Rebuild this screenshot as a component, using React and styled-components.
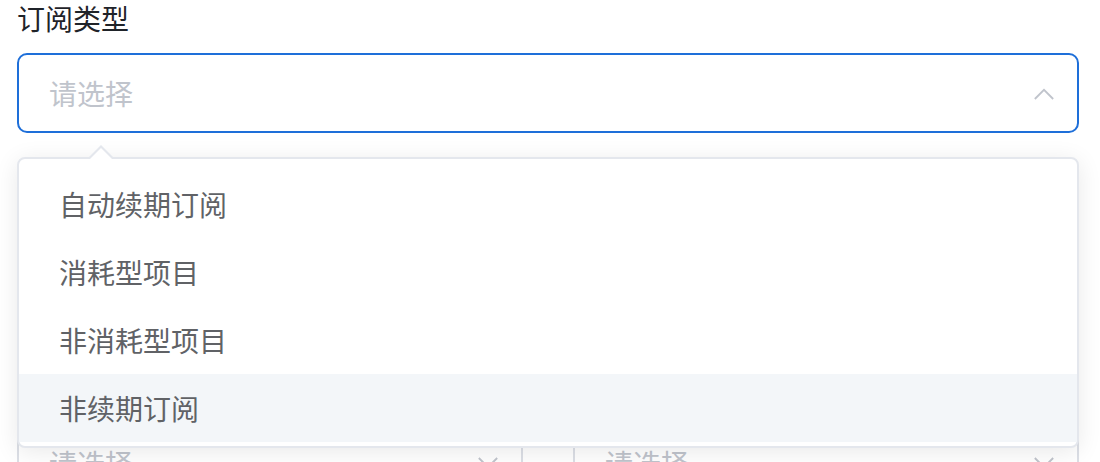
import React from "react";
import styled, { createGlobalStyle } from "styled-components";

const GlobalStyle = createGlobalStyle`
  html, body {
    margin: 0;
    padding: 0;
    background: #ffffff;
    overflow: hidden;
  }
  body {
    font-family: "Noto Sans CJK SC", "Noto Sans", sans-serif;
  }
`;

const options = ["自动续期订阅", "消耗型项目", "非消耗型项目", "非续期订阅"];

export default function App() {
    return (
        <Page>
            <GlobalStyle />
            <Label>订阅类型</Label>
            <Field>
                <SelectBox focused>
                    <Placeholder>请选择</Placeholder>
                    <Chevron up />
                </SelectBox>
                <Dropdown>
                    <Arrow />
                    <OptionList>
                        {options.map((o, i) => (
                            <Option key={o} hover={i === 3}>{o}</Option>
                        ))}
                    </OptionList>
                </Dropdown>
            </Field>
            <Row>
                <SelectBox grow>
                    <Placeholder>请选择</Placeholder>
                    <Chevron />
                </SelectBox>
                <Separator />
                <SelectBox grow>
                    <Placeholder>请选择</Placeholder>
                    <Chevron />
                </SelectBox>
            </Row>
        </Page>
    );
}

function Chevron({ up }) {
    return (
        <ChevronIcon viewBox="0 0 24 16" up={up ? 1 : 0}>
            <polyline points="2,14 12,4 22,14" fill="none" stroke="#c0c4cc" strokeWidth="2" />
        </ChevronIcon>
    );
}

const Page = styled.div`
  padding: 0 21px 0 17px;
`;

const Label = styled.div`
  font-size: 28px;
  line-height: 36px;
  color: #1f2329;
  margin-bottom: 17px;
`;

const Field = styled.div`
  position: relative;
`;

const SelectBox = styled.div`
  box-sizing: border-box;
  height: 80px;
  display: flex;
  align-items: center;
  justify-content: space-between;
  padding: 0 22px 0 30px;
  border: 2px solid ${p => (p.focused ? "#1e6fd9" : "#dcdfe6")};
  border-radius: 10px;
  background: #fff;
  flex: ${p => (p.grow ? "1 1 0" : "none")};
`;

const Placeholder = styled.span`
  font-size: 28px;
  color: #c0c4cc;
  line-height: 1;
`;

const ChevronIcon = styled.svg`
  width: 22px;
  height: 15px;
  transform: ${p => (p.up ? "none" : "rotate(180deg)")};
`;

const Dropdown = styled.div`
  position: absolute;
  top: 104px;
  left: 0;
  right: 0;
  box-sizing: border-box;
  border: 2px solid #e4e7ed;
  border-radius: 8px;
  background: #fff;
  box-shadow: 0 4px 24px rgba(0, 0, 0, 0.09);
  z-index: 10;
`;

const Arrow = styled.div`
  position: absolute;
  top: -14px;
  left: 69px;
  width: 0;
  height: 0;
  border-left: 13px solid transparent;
  border-right: 13px solid transparent;
  border-bottom: 13px solid #e4e7ed;

  &::after {
    content: "";
    position: absolute;
    left: -11px;
    top: 3px;
    border-left: 11px solid transparent;
    border-right: 11px solid transparent;
    border-bottom: 11px solid #fff;
  }
`;

const OptionList = styled.ul`
  list-style: none;
  margin: 0;
  padding: 11px 0 4px;
`;

const Option = styled.li`
  height: 68px;
  display: flex;
  align-items: center;
  padding: 0 40px;
  font-size: 28px;
  color: #606266;
  background: ${p => (p.hover ? "#f3f6f9" : "#fff")};
`;

const Row = styled.div`
  display: flex;
  margin-top: 290px;
`;

const Separator = styled.div`
  flex: 0 0 50px;
`;
